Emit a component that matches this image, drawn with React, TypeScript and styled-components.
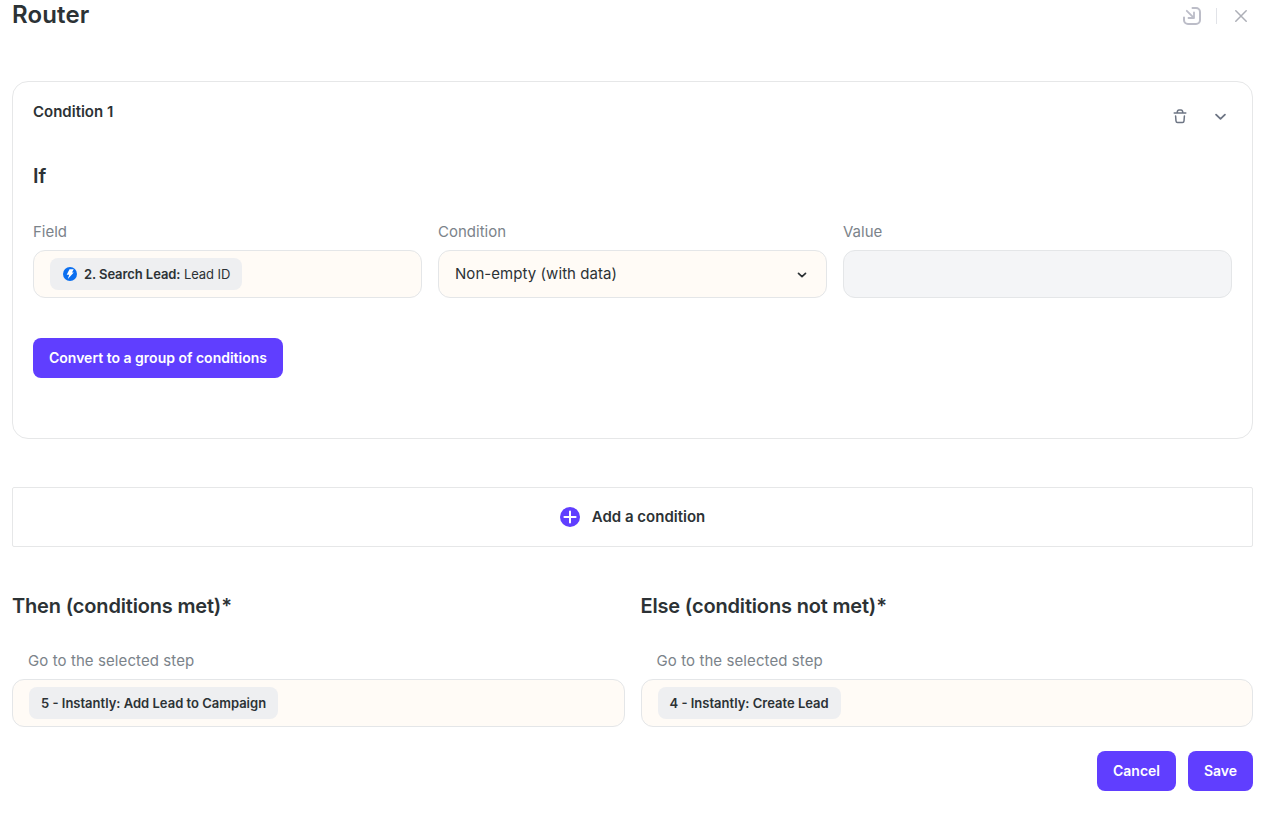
import React from "react";
import styled, { createGlobalStyle } from "styled-components";

const GlobalStyle = createGlobalStyle`
  *, *::before, *::after { box-sizing: border-box; }
  body {
    margin: 0;
    background: #fff;
    color: #2c3235;
    font-family: Inter, "Liberation Sans", sans-serif;
    font-size: 15px;
  }
`;

const Page = styled.main`
  padding: 0 26px 0 12px;
`;

const Header = styled.header`
  display: flex;
  justify-content: space-between;
  height: 30px;
  margin-bottom: 51px;
`;

const Title = styled.h1`
  margin: 0;
  font-size: 24px;
  font-weight: 600;
  line-height: 30px;
  letter-spacing: 0.15px;
`;

const HeaderActions = styled.div`
  display: flex;
  align-items: center;
  height: 32px;
  padding-right: 6px;
`;

const Divider = styled.span`
  width: 1px;
  height: 16px;
  margin: 0 18px 0 15px;
  background: #e1e3e8;
`;

const IconButton = styled.button<{ $color: string }>`
  display: flex;
  padding: 0;
  border: 0;
  background: none;
  color: ${(p) => p.$color};
`;

const Card = styled.section`
  height: 358px;
  padding: 18px 20px 0;
  border: 1px solid #e6e7e8;
  border-radius: 16px;
`;

const CardHead = styled.div`
  display: flex;
  justify-content: space-between;
  height: 32px;
`;

const CardTitle = styled.h3`
  margin: 0;
  font-size: 15px;
  font-weight: 600;
  line-height: 24px;
`;

const CardActions = styled.div`
  display: flex;
  align-items: center;
  gap: 27px;
  padding-right: 5px;
`;

const SectionTitle = styled.h2<{ $top: number; $spacing?: number }>`
  margin: ${(p) => p.$top}px 0 0;
  font-size: 20px;
  font-weight: 600;
  line-height: 28px;
  letter-spacing: ${(p) => p.$spacing ?? 0}px;
`;

const Columns = styled.div<{ $count: number; $top: number }>`
  display: grid;
  grid-template-columns: repeat(${(p) => p.$count}, minmax(0, 1fr));
  gap: 16px;
  margin-top: ${(p) => p.$top}px;
`;

const Label = styled.div<{ $indent?: boolean }>`
  margin-bottom: 8px;
  padding-left: ${(p) => (p.$indent ? 16 : 0)}px;
  color: #7b838a;
  font-size: 15px;
  line-height: 20px;
  letter-spacing: ${(p) => (p.$indent ? 0.09 : 0)}px;
`;

const Control = styled.div<{ $disabled?: boolean }>`
  display: flex;
  align-items: center;
  justify-content: space-between;
  height: 48px;
  padding: 0 16px;
  border: 1px solid #e4e6e8;
  border-radius: 12px;
  background: ${(p) => (p.$disabled ? "#f4f5f7" : "#fffbf6")};
`;

const SelectedValue = styled.span`
  font-size: 15px;
  line-height: 20px;
  letter-spacing: 0.06px;
`;

const Chip = styled.div<{ $withIcon?: boolean }>`
  display: flex;
  align-items: center;
  height: 32px;
  padding: 0 12px 0 ${(p) => (p.$withIcon ? 13 : 12)}px;
  border-radius: 8px;
  background: #eeeff1;
  font-size: 13px;
  letter-spacing: ${(p) => (p.$withIcon ? -0.08 : 0)}px;
  white-space: pre;

  svg { margin-right: 7px; }
`;

const Strong = styled.span`
  font-weight: 600;
`;

const Button = styled.button<{ $width: number; $top?: number }>`
  display: block;
  width: ${(p) => p.$width}px;
  height: 40px;
  margin: ${(p) => p.$top ?? 0}px 0 0;
  padding: 0;
  border: 0;
  border-radius: 8px;
  background: #603eff;
  color: #fff;
  font: 600 14px/20px Inter, "Liberation Sans", sans-serif;
  white-space: nowrap;
`;

const AddCondition = styled.button`
  display: flex;
  align-items: center;
  justify-content: center;
  gap: 12px;
  width: 100%;
  height: 60px;
  margin-top: 48px;
  padding: 0;
  border: 1px solid #e6e7e8;
  border-radius: 2px;
  background: #fff;
  color: #2c3235;
  font: 600 15px/20px Inter, "Liberation Sans", sans-serif;
`;

const Footer = styled.footer`
  display: flex;
  justify-content: flex-end;
  gap: 12px;
  margin-top: 24px;
`;

const CollapseIcon = () => (
  <svg width="18" height="18" viewBox="0 0 18 18" fill="none" stroke="currentColor" strokeWidth="2" strokeLinecap="round" strokeLinejoin="round">
    <path d="M9.500 1H13a4 4 0 0 1 4 4v8a4 4 0 0 1-4 4H5a4 4 0 0 1-4-4v-2.500" />
    <path d="M3.800 3.800l6.800 6.800M11 5.500V11H5.500" strokeWidth="1.8" />
  </svg>
);

const CloseIcon = () => (
  <svg width="12" height="12" viewBox="0 0 12 12" fill="none" stroke="currentColor" strokeWidth="1.5" strokeLinecap="round">
    <path d="M.8.8l10.400 10.400M11.200.8L.8 11.200" />
  </svg>
);

const TrashIcon = () => (
  <svg width="14" height="16" viewBox="0 0 14 16" fill="none" stroke="currentColor" strokeWidth="1.5" strokeLinecap="round" strokeLinejoin="round">
    <path d="M1.200 5h11.600M4.200 4.800C4.200 2.900 4.800 2 6 2h2c1.200 0 1.800.9 1.800 2.800" />
    <path d="M2.600 8l.4 5c.1 1 .6 1.500 1.500 1.500h5c.9 0 1.400-.5 1.500-1.500l.4-5" />
  </svg>
);

const ChevronIcon = ({ size }: { size: number }) => (
  <svg width={size} height={size} viewBox="0 0 12 12" fill="none" stroke="currentColor" strokeWidth="1.7" strokeLinecap="round" strokeLinejoin="round">
    <path d="M1.900 4.300L6 8.200l4.100-3.900" />
  </svg>
);

const SelectChevron = () => (
  <svg width="16" height="16" viewBox="0 0 16 16" fill="none" stroke="currentColor" strokeWidth="1.700" strokeLinecap="round" strokeLinejoin="round">
    <path d="M4.500 7.400L8 10.700l3.500-3.300" />
  </svg>
);

const BoltIcon = () => (
  <svg width="14" height="14" viewBox="0 0 14 14">
    <circle cx="7" cy="7" r="7" fill="#0b6ff0" />
    <path d="M6.500 2.200h4.200L9 5.600h1.800L4.800 12l1.400-4.200H3.700z" fill="#fff" />
  </svg>
);

const PlusIcon = () => (
  <svg width="20" height="20" viewBox="0 0 20 20">
    <circle cx="10" cy="10" r="10" fill="#603eff" />
    <path d="M10 4.400v11.200M4.400 10h11.200" stroke="#fff" strokeWidth="2" strokeLinecap="round" />
  </svg>
);

const branches = [
  { title: "Then (conditions met)*", step: "5 - Instantly: Add Lead to Campaign" },
  { title: "Else (conditions not met)*", step: "4 - Instantly: Create Lead" },
];

export default function App() {
  return (
    <>
      <GlobalStyle />
      <Page>
        <Header>
          <Title>Router</Title>
          <HeaderActions>
            <IconButton $color="#bcbdc8" aria-label="Collapse"><CollapseIcon /></IconButton>
            <Divider />
            <IconButton $color="#adafb7" aria-label="Close"><CloseIcon /></IconButton>
          </HeaderActions>
        </Header>

        <Card>
          <CardHead>
            <CardTitle>Condition 1</CardTitle>
            <CardActions>
              <IconButton $color="#6d7584" aria-label="Delete"><TrashIcon /></IconButton>
              <IconButton $color="#6d7584" aria-label="Expand"><ChevronIcon size={13} /></IconButton>
            </CardActions>
          </CardHead>
          <SectionTitle $top={30}>If</SectionTitle>
          <Columns $count={3} $top={32}>
            <div>
              <Label>Field</Label>
              <Control>
                <Chip $withIcon>
                  <BoltIcon />
                  <Strong>2. Search Lead:</Strong> Lead ID
                </Chip>
              </Control>
            </div>
            <div>
              <Label>Condition</Label>
              <Control>
                <SelectedValue>Non-empty (with data)</SelectedValue>
                <SelectChevron />
              </Control>
            </div>
            <div>
              <Label>Value</Label>
              <Control $disabled />
            </div>
          </Columns>
          <Button $width={250} $top={40}>Convert to a group of conditions</Button>
        </Card>

        <AddCondition><PlusIcon />Add a condition</AddCondition>

        <Columns $count={2} $top={45}>
          {branches.map((branch) => (
            <div key={branch.title}>
              <SectionTitle $top={0} $spacing={-0.17}>{branch.title}</SectionTitle>
              <Columns $count={1} $top={31}>
                <div>
                  <Label $indent>Go to the selected step</Label>
                  <Control>
                    <Chip><Strong>{branch.step}</Strong></Chip>
                  </Control>
                </div>
              </Columns>
            </div>
          ))}
        </Columns>

        <Footer>
          <Button $width={79}>Cancel</Button>
          <Button $width={65}>Save</Button>
        </Footer>
      </Page>
    </>
  );
}
